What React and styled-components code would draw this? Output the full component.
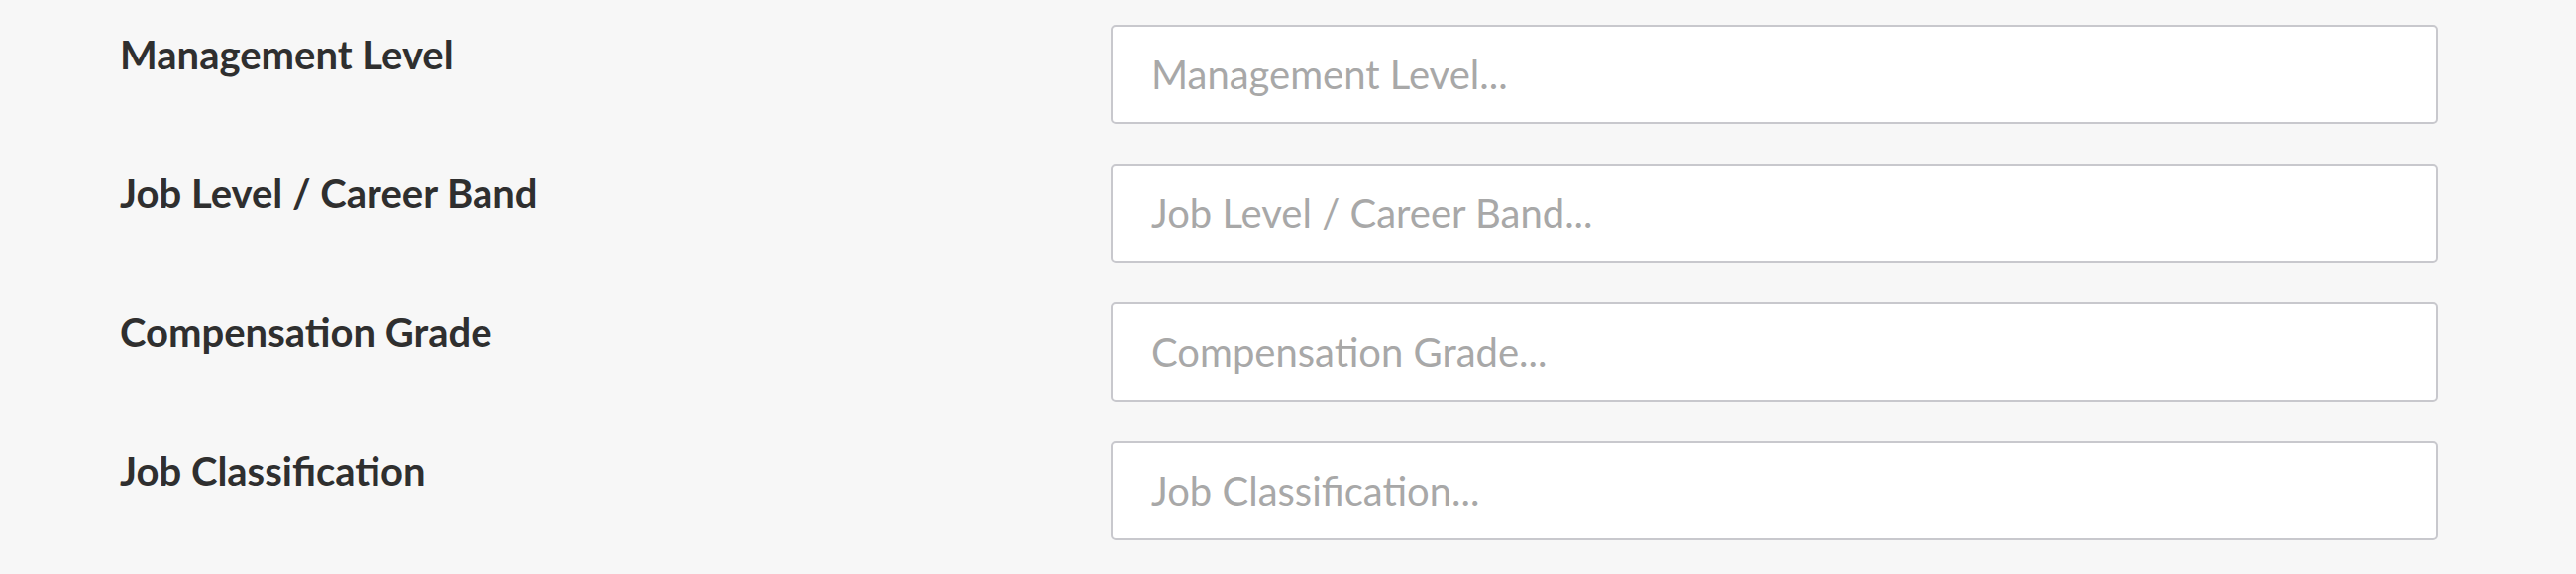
import React from 'react';
import styled, { createGlobalStyle } from 'styled-components';

const GlobalStyle = createGlobalStyle`
  html, body {
    margin: 0;
    padding: 0;
    background: #f7f7f7;
    font-family: Lato, "Open Sans", sans-serif;
  }
`;

const Form = styled.div`
  display: flex;
  flex-direction: column;
  gap: 40px;
  padding: 25px 139px 0 121px;
`;

const Row = styled.div`
  display: flex;
  align-items: flex-start;
`;

const Label = styled.label`
  width: 1000px;
  flex-shrink: 0;
  padding-top: 6px;
  font-size: 40px;
  line-height: 48px;
  font-weight: 700;
  color: #2f2f2f;
`;

const Input = styled.input`
  flex: 1;
  box-sizing: border-box;
  height: 100px;
  padding: 0 39px;
  border: 2px solid #c8c8cd;
  border-radius: 5px;
  background: #fff;
  font-family: Lato, "Open Sans", sans-serif;
  font-size: 40px;
  line-height: 48px;
  color: #333;
  outline: none;

  &::placeholder {
    color: #a8a8a8;
  }
`;

const fields = [
  'Management Level',
  'Job Level / Career Band',
  'Compensation Grade',
  'Job Classification',
];

const App = () => (
  <>
    <GlobalStyle />
    <Form>
      {fields.map((name) => (
        <Row key={name}>
          <Label>{name}</Label>
          <Input placeholder={`${name}...`} />
        </Row>
      ))}
    </Form>
  </>
);

export default App;
